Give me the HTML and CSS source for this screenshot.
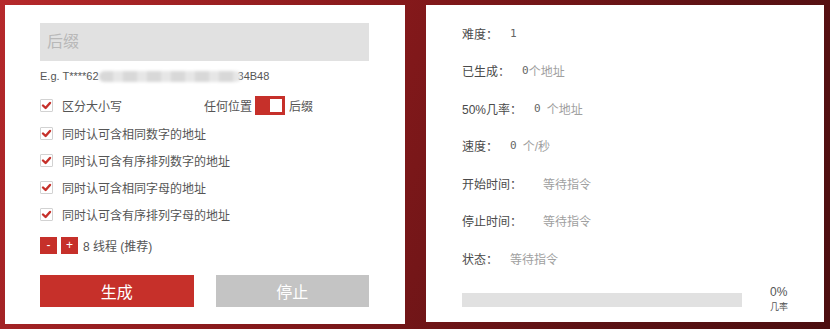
FILE: index.html
```html
<!DOCTYPE html>
<html lang="zh-CN">
  <head>
    <meta charset="UTF-8" />
    <meta name="viewport" content="width=device-width, initial-scale=1.0" />
    <title>靓号生成</title>
    <link rel="stylesheet" href="styles.css">
  </head>
  <body>
    <main class="page">
      <section class="panel panel_form">
        <input class="suffix" type="text" placeholder="后缀" />
        <p class="example">
          E.g. T****62<span class="example__blur"></span>34B48
        </p>

        <div class="options">
          <div class="option option_first">
            <span class="check"><svg viewBox="0 0 13 13" width="13" height="13"><polyline points="3,6.5 5.6,9 10,4" /></svg></span>
            <span class="option__label option__label_fixed">区分大小写</span>
            <span class="switch__label">任何位置</span>
            <span class="switch"><span class="switch__knob"></span></span>
            <span class="switch__label">后缀</span>
          </div>
          <div class="option">
            <span class="check"><svg viewBox="0 0 13 13" width="13" height="13"><polyline points="3,6.5 5.6,9 10,4" /></svg></span>
            <span class="option__label">同时认可含相同数字的地址</span>
          </div>
          <div class="option">
            <span class="check"><svg viewBox="0 0 13 13" width="13" height="13"><polyline points="3,6.5 5.6,9 10,4" /></svg></span>
            <span class="option__label">同时认可含有序排列数字的地址</span>
          </div>
          <div class="option">
            <span class="check"><svg viewBox="0 0 13 13" width="13" height="13"><polyline points="3,6.5 5.6,9 10,4" /></svg></span>
            <span class="option__label">同时认可含相同字母的地址</span>
          </div>
          <div class="option">
            <span class="check"><svg viewBox="0 0 13 13" width="13" height="13"><polyline points="3,6.5 5.6,9 10,4" /></svg></span>
            <span class="option__label">同时认可含有序排列字母的地址</span>
          </div>
        </div>

        <div class="threads">
          <button class="threads__btn">-</button>
          <button class="threads__btn">+</button>
          <span class="threads__label">8 线程 (推荐)</span>
        </div>

        <div class="actions">
          <button class="action action_start">生成</button>
          <button class="action action_stop">停止</button>
        </div>
      </section>

      <section class="panel panel_stats">
        <div class="stat">
          <span class="stat__label">难度：</span>
          <span class="stat__num">1</span>
        </div>
        <div class="stat">
          <span class="stat__label">已生成：</span>
          <span class="stat__num">0</span><span class="stat__unit">个地址</span>
        </div>
        <div class="stat">
          <span class="stat__label">50%几率：</span>
          <span class="stat__num">0</span><span class="stat__unit stat__unit_gap">个地址</span>
        </div>
        <div class="stat">
          <span class="stat__label">速度：</span>
          <span class="stat__num">0</span><span class="stat__unit stat__unit_gap">个/秒</span>
        </div>
        <div class="stat">
          <span class="stat__label">开始时间：</span>
          <span class="stat__unit stat__unit_wide">等待指令</span>
        </div>
        <div class="stat">
          <span class="stat__label">停止时间：</span>
          <span class="stat__unit stat__unit_wide">等待指令</span>
        </div>
        <div class="stat">
          <span class="stat__label">状态：</span>
          <span class="stat__unit">等待指令</span>
        </div>

        <div class="progress">
          <div class="progress__bar"><div class="progress__fill" style="width: 0%"></div></div>
          <div class="progress__info">
            <div class="progress__value">0%</div>
            <div class="progress__caption">几率</div>
          </div>
        </div>
      </section>
    </main>
  </body>
</html>
```

FILE: styles.css
```css
:root {
  --red-color: #c6302a;
  --text-color: #555;
  --muted-color: #a0a0a0;
  --grey-color: #e1e1e1;
  --white-color: #fff;
}

* {
  box-sizing: border-box;
  margin: 0;
  padding: 0;
}
body {
  font-family: "Liberation Sans", "Noto Sans CJK SC", sans-serif;
  color: var(--text-color);
}
.page {
  width: 830px;
  height: 329px;
  display: flex;
  align-items: flex-start;
  gap: 21px;
  padding: 5px;
  background: linear-gradient(115deg, #b6292b 0%, #86191b 40%, #5c1214 75%, #4c0e10 100%);
}
.panel {
  background-color: var(--white-color);
  display: flex;
  flex-direction: column;
}
.panel_form {
  width: 400px;
  height: 319px;
  padding: 18px 36px 0 35px;
}
.panel_stats {
  width: 398px;
  height: 317px;
  padding: 18px 0 0 36px;
}

/* form */
.suffix {
  height: 38px;
  width: 100%;
  border: none;
  outline: none;
  background-color: var(--grey-color);
  padding: 0 7px;
  font-family: inherit;
  font-size: 16px;
}
.suffix::placeholder {
  color: #b8b8b8;
}
.example {
  margin-top: 8px;
  height: 14px;
  line-height: 14px;
  font-size: 11px;
  display: flex;
  align-items: center;
}
.example__blur {
  display: inline-block;
  width: 142px;
  height: 11px;
  margin: 0 -3px 0 0;
  border-radius: 6px;
  background: repeating-linear-gradient(90deg, #d8d8d8 0 14px, #e6e6e6 14px 24px);
  filter: blur(1.5px);
}

.options {
  margin-top: 12px;
  display: flex;
  flex-direction: column;
  gap: 7px;
}
.option {
  height: 20px;
  display: flex;
  align-items: center;
  font-size: 12px;
}
.option_first {
  margin-bottom: 1px;
}
.check {
  width: 13px;
  height: 13px;
  border: 1px solid #d2d2d2;
  border-radius: 1px;
  margin-right: 9px;
  display: flex;
}
.check svg {
  margin: -1px;
  fill: none;
  stroke: var(--red-color);
  stroke-width: 2.4;
  stroke-linecap: round;
  stroke-linejoin: round;
}
.option__label_fixed {
  width: 142px;
}
.switch {
  width: 30px;
  height: 19px;
  margin: 0 4px 0 3px;
  background-color: var(--red-color);
  display: flex;
  justify-content: flex-end;
  align-items: center;
  padding-right: 3px;
}
.switch__knob {
  width: 12px;
  height: 13px;
  background-color: var(--white-color);
}

.threads {
  margin-top: 13px;
  height: 17px;
  display: flex;
  align-items: center;
  gap: 4px;
}
.threads__btn {
  width: 17px;
  height: 17px;
  border: none;
  background-color: var(--red-color);
  color: var(--white-color);
  font-family: inherit;
  font-size: 12px;
  line-height: 17px;
}
.threads__label {
  margin-left: 1px;
  font-size: 12px;
}

.actions {
  margin-top: 21px;
  display: flex;
  gap: 22px;
}
.action {
  flex: 1;
  height: 32px;
  border: none;
  color: var(--white-color);
  font-family: inherit;
  font-size: 16px;
}
.action_start {
  background-color: var(--red-color);
}
.action_stop {
  background-color: #c4c4c4;
}

/* stats */
.stat {
  height: 20px;
  margin-bottom: 17.6px;
  display: flex;
  align-items: center;
  font-size: 12px;
  color: #4a4a4a;
}
.stat__label {
  margin-right: 12px;
}
.stat__num {
  font-family: "DejaVu Sans Mono", monospace;
  font-size: 11px;
  color: #666;
}
.stat__unit {
  color: var(--muted-color);
}
.stat__unit_gap {
  margin-left: 6px;
}
.stat__unit_wide {
  margin-left: 9px;
}

.progress {
  margin-top: -1px;
  display: flex;
  align-items: flex-start;
}
.progress__bar {
  margin-top: 8px;
  width: 280px;
  height: 14px;
  background-color: var(--grey-color);
}
.progress__fill {
  height: 100%;
  background-color: var(--red-color);
}
.progress__info {
  margin-left: 28px;
  display: flex;
  flex-direction: column;
  gap: 1px;
}
.progress__value {
  font-size: 12px;
}
.progress__caption {
  font-size: 9px;
}
```
